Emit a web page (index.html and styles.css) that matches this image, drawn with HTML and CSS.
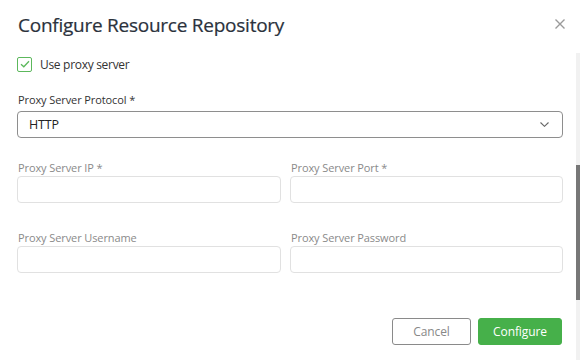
FILE: index.html
```html
<!DOCTYPE html>
<html>
<head>
<meta charset="utf-8">
<link rel="stylesheet" href="styles.css">
</head>
<body>
<div class="modal">
  <div class="header">
    <h1 class="title">Configure Resource Repository</h1>
    <button class="close" aria-label="Close">
      <svg width="10" height="10" viewBox="0 0 10 10"><path d="M0.5 0.5 L9.5 9.5 M9.5 0.5 L0.5 9.5" stroke="#9a9a9a" stroke-width="1.4" fill="none"/></svg>
    </button>
  </div>
  <div class="main">
    <div class="content">
      <label class="check-row">
        <span class="checkbox">
          <svg width="10" height="8" viewBox="0 0 10 8"><path d="M1 4.2 L3.8 6.8 L9 1.2" stroke="#5cb85c" stroke-width="1.3" fill="none"/></svg>
        </span>
        <span class="check-label">Use proxy server</span>
      </label>

      <div class="field protocol">
        <div class="label">Proxy Server Protocol *</div>
        <div class="select">
          <span>HTTP</span>
          <svg width="9" height="5" viewBox="0 0 9 5"><path d="M0.5 0.5 L4.5 4.3 L8.5 0.5" stroke="#666" stroke-width="1.1" fill="none"/></svg>
        </div>
      </div>

      <div class="grid">
        <div class="field">
          <div class="label disabled">Proxy Server IP *</div>
          <div class="input"></div>
        </div>
        <div class="field">
          <div class="label disabled">Proxy Server Port *</div>
          <div class="input"></div>
        </div>
        <div class="field">
          <div class="label disabled">Proxy Server Username</div>
          <div class="input"></div>
        </div>
        <div class="field">
          <div class="label disabled">Proxy Server Password</div>
          <div class="input"></div>
        </div>
      </div>

      <div class="footer">
        <button class="btn cancel">Cancel</button>
        <button class="btn primary">Configure</button>
      </div>
    </div>
    <div class="scrollbar"><div class="thumb"></div></div>
  </div>
</div>
</body>
</html>
```
FILE: styles.css
```css
* { box-sizing: border-box; }
html, body { margin: 0; padding: 0; background: #fff; }
body { font-family: "Open Sans", "Noto Sans", sans-serif; color: #333; }
.modal { width: 580px; height: 360px; overflow: hidden; display: flex; flex-direction: column; background: #fff; }
.header { height: 53px; display: flex; align-items: flex-start; justify-content: space-between; padding: 0 15px 0 18px; }
.title { margin: 12px 0 0; font-size: 19px; letter-spacing: -0.25px; font-weight: 400; color: #2b323c; line-height: 26px; -webkit-text-stroke: 0.2px #2b323c; }
.close { border: 0; background: none; padding: 0; margin-top: 19px; width: 10px; height: 10px; display: block; }
.close svg { display: block; }
.main { flex: 1; display: flex; }
.content { flex: 1; padding: 0 13px 0 17px; }
.scrollbar { width: 4px; background: #f1f1f1; padding-top: 112px; }
.thumb { height: 135px; background: #777; }
.check-row { height: 22px; display: flex; align-items: center; gap: 8px; }
.checkbox { width: 15px; height: 15px; border: 1px solid #5cb85c; border-radius: 2px; display: flex; align-items: center; justify-content: center; }
.checkbox svg { display: block; }
.check-label { font-size: 12px; letter-spacing: -0.3px; color: #333; }
.label { font-size: 11px; letter-spacing: -0.1px; line-height: 16px; color: #333; padding-left: 1px; }
.label.disabled { color: #8a8a8a; }
.protocol { margin-top: 17px; }
.protocol .label { margin-bottom: 3px; }
.select { height: 27px; border: 1px solid #8e8e8e; border-radius: 4px; display: flex; align-items: center; justify-content: space-between; padding: 0 13px 0 11px; font-size: 12.5px; letter-spacing: -0.2px; color: #222; }
.select svg { display: block; }
.grid { margin-top: 22px; display: grid; grid-template-columns: 264px 1fr; column-gap: 9px; row-gap: 27px; }
.input { height: 27px; border: 1px solid #e1e1e1; border-radius: 4px; }
.footer { margin-top: 45px; display: flex; justify-content: flex-end; gap: 7px; padding-right: 1px; }
.btn { font-family: inherit; font-size: 12px; letter-spacing: -0.1px; height: 27px; border-radius: 3px; padding: 0; }
.cancel { width: 79px; background: #fff; border: 1px solid #8a8a8a; color: #888; }
.primary { width: 84px; background: #46b04a; border: 1px solid #46b04a; color: #fff; }
```
